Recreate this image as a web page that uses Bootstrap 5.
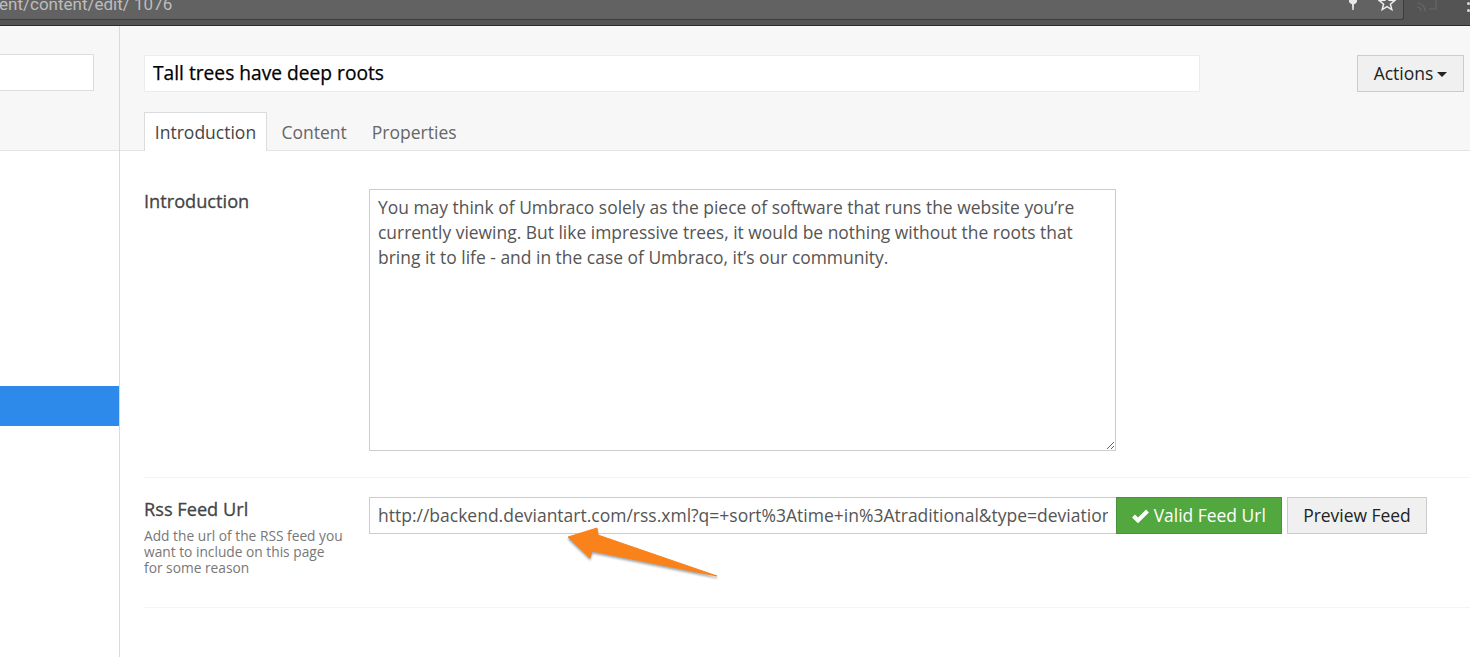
<!DOCTYPE html>
<html lang="en">
<head>
<meta charset="utf-8">
<title>Umbraco</title>
<link rel="stylesheet" href="https://cdn.jsdelivr.net/npm/bootstrap@5.3.0/dist/css/bootstrap.min.css">
<style>
html,body{height:657px;overflow:hidden;background:#fff;font-family:"Open Sans",sans-serif;color:#555}
.chrome-bar{height:26px;background:#545454;border-bottom:1px solid #2b2b2b;overflow:hidden}
.url-field{height:20px;width:1404px;flex:none;background:#626262;border-bottom:1px solid #3d3d3d;border-right:1px solid #3d3d3d;border-bottom-right-radius:3px;color:#bdbdbd;font:17px "Roboto",sans-serif;line-height:20px}
.url-text{margin-top:-6px;margin-left:-1px;white-space:nowrap}
.url-icons{padding-right:7px;margin-top:-7px;gap:20px}
.cast-icon{margin:-5px 0 0 9px;flex:none}
.more-dots{width:3px;margin-left:30px;margin-top:2px;flex:none}
.more-dots i{display:block;width:3px;height:3px;border-radius:50%;background:#ddd;margin-bottom:4px}
.app-body{height:631px}
.side-tree{width:120px;flex:none;border-right:1px solid #d9d9d9}
.side-head{height:125px;background:#f7f7f7;border-bottom:1px solid #e3e3e3;padding-top:28px}
.side-search{height:37px;width:94px;background:#fff;border:1px solid #dcdcdc;border-left:0}
.side-active{height:40px;background:#2e8aea;margin-top:235px}
.editor{flex:1;min-width:0;position:relative}
.editor-head{height:125px;background:#f7f7f7;border-bottom:1px solid #e3e3e3;padding:29px 6px 0 24px}
.name-input{width:1056px;height:37px;background:#fff;border:1px solid #ececec;font-size:19.2px;color:#000;-webkit-text-stroke:.25px #000;padding:0 8px 2px;border-radius:0}
.name-input:focus{outline:0}
.actions-btn{width:107px;height:37px;background:#f0f0f0;border:1px solid #ccc;border-radius:0;color:#222;font-size:17.5px;line-height:35px;padding:0;text-align:center}
.actions-btn:after{content:"";display:inline-block;border-top:5px solid #222;border-left:5px solid transparent;border-right:5px solid transparent;margin-left:4px;vertical-align:3px}
.tab-row{margin-top:20px;height:39px}
.tab-item{font-size:17.5px;color:#666;padding:0 12.5px;height:39px;line-height:41px;white-space:nowrap}
.tab-item.is-on{width:123px;text-align:center;background:#fff;border:1px solid #dcdcdc;border-bottom:0;color:#444;padding:0;line-height:38px;margin-right:2px}
.prop-pane{padding:0 0 0 24px}
.prop-row{border-bottom:1px solid #f4f4f4}
.prop-label{width:225px;flex:none}
.prop-name{font-size:18.2px;color:#444;-webkit-text-stroke:.3px #444;line-height:24px}
.prop-help{font-size:13.75px;line-height:16px;color:#777;margin-top:7px;width:201px}
.intro-row{height:327px;padding-top:38px}
.intro-area{width:747px;height:262px;border:1px solid #ccc;border-radius:0;color:#555;font-size:17.45px;line-height:25px;padding:5px 8px;font-family:inherit;display:block;resize:both}
.intro-area:focus,.feed-input:focus{outline:0}
.feed-row{height:130px;padding-top:19px}
.feed-input{width:747px;height:37px;border:1px solid #ccc;border-right:0;border-radius:0;color:#555;font-size:17.5px;padding:0 8px 2px;font-family:inherit}
.valid-btn{width:166px;height:37px;background:#52a73f;border:1px solid #46933a;border-radius:0;color:#fff;font-size:17.45px;padding:0;white-space:nowrap}
.valid-btn svg{vertical-align:-1px}
.preview-btn{width:140px;height:37px;margin-left:5px;background:#f0f0f0;border:1px solid #ccc;border-radius:0;color:#222;font-size:17.45px;padding:0;white-space:nowrap}
.feed-arrow{position:absolute;left:0;top:0;pointer-events:none;filter:drop-shadow(0 2px 1px rgba(0,0,0,.35))}
</style>
</head>
<body>
<div class="chrome-bar d-flex">
  <div class="url-field d-flex justify-content-between">
    <div class="url-text">ent/content/edit/ 1076</div>
    <div class="url-icons d-flex">
      <svg width="10" height="18" viewBox="0 0 10 18"><path d="M1 0h8v9l-2 2H6l-.3 6H4.300L4 11H3L1 9z" fill="#e8e8e8"/></svg>
      <svg width="18" height="18" viewBox="0 0 18 18"><path d="M9 2l2.100 5.200 5.600.4-4.300 3.600 1.400 5.400L9 13.700l-4.800 2.900 1.400-5.400L1.300 7.600l5.600-.4z" fill="none" stroke="#eee" stroke-width="1.500"/></svg>
    </div>
  </div>
  <svg class="cast-icon" width="24" height="16" viewBox="0 0 24 16"><path d="M4 2h19v12h-7M4 12a4 4 0 0 1 4 4M4 8a8 8 0 0 1 8 8" fill="none" stroke="#686868" stroke-width="1.200"/></svg>
  <div class="more-dots"><i></i><i></i></div>
</div>
<div class="app-body d-flex">
  <aside class="side-tree">
    <div class="side-head"><div class="side-search"></div></div>
    <div class="side-active"></div>
  </aside>
  <main class="editor">
    <div class="editor-head">
      <div class="d-flex justify-content-between">
        <input class="name-input" type="text" value="Tall trees have deep roots" aria-label="Name">
        <button class="actions-btn" type="button">Actions</button>
      </div>
      <div class="tab-row d-flex">
        <div class="tab-item is-on">Introduction</div>
        <div class="tab-item">Content</div>
        <div class="tab-item">Properties</div>
      </div>
    </div>
    <div class="prop-pane">
      <div class="prop-row intro-row d-flex">
        <div class="prop-label"><div class="prop-name">Introduction</div></div>
        <textarea class="intro-area" aria-label="Introduction">You may think of Umbraco solely as the piece of software that runs the website you’re currently viewing. But like impressive trees, it would be nothing without the roots that bring it to life - and in the case of Umbraco, it’s our community.</textarea>
      </div>
      <div class="prop-row feed-row d-flex">
        <div class="prop-label">
          <div class="prop-name">Rss Feed Url</div>
          <div class="prop-help">Add the url of the RSS feed you want to include on this page for some reason</div>
        </div>
        <div class="d-flex align-items-start">
          <input class="feed-input" type="text" value="http://backend.deviantart.com/rss.xml?q=+sort%3Atime+in%3Atraditional&amp;type=deviation" aria-label="Rss Feed Url">
          <button class="valid-btn" type="button"><svg width="17" height="14" viewBox="0 0 17 14"><path d="M1.500 7L6 11.500l9.500-9.500" fill="none" stroke="#fff" stroke-width="4"/></svg> Valid Feed Url</button>
          <button class="preview-btn" type="button">Preview Feed</button>
        </div>
      </div>
    </div>
    <svg class="feed-arrow" width="1350" height="631" viewBox="0 0 1350 631"><path d="M448 511L477 502L478 509L597 550L472 525L470 532Z" fill="#f9821a" stroke="#f9821a" stroke-width="1" stroke-linejoin="round"/></svg>
  </main>
</div>
</body>
</html>
